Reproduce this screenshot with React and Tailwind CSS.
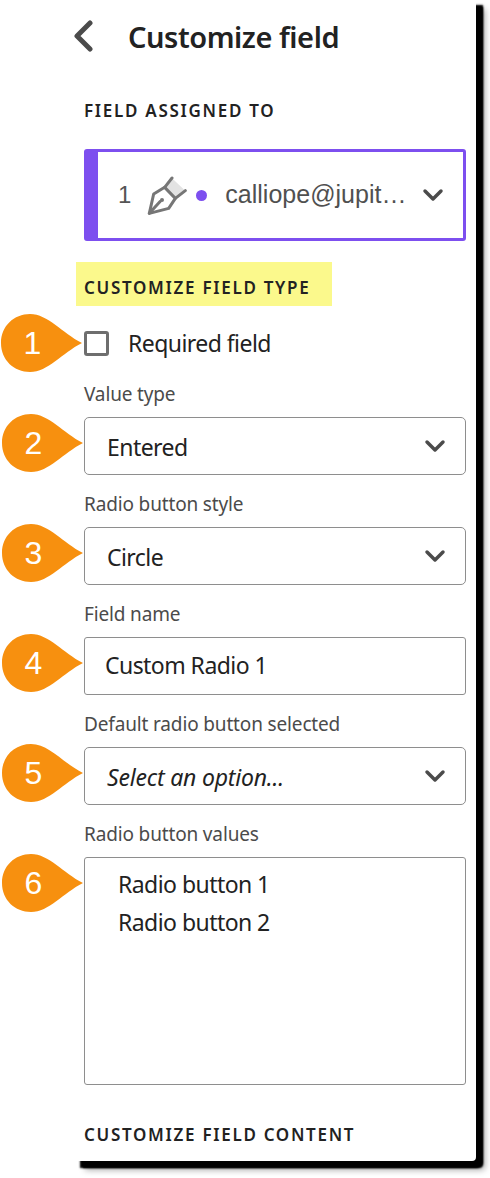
import { ChevronDown } from 'lucide-react'

const font = "font-['Noto_Sans',sans-serif]"

// Orange callout teardrop, tip points right at the field it annotates.
function Badge({ n, place = 'top-[-4px]' }) {
  return (
    <div className={`absolute left-[-84px] w-[82px] h-[58px] ${place}`}>
      <svg width="82" height="58" viewBox="0 0 82 58" className="block">
        <path d="M1 29C1 12 14 0 30 0C48 0 62 19 82 29C62 39 48 58 30 58C14 58 1 46 1 29Z" fill="#f7900f" />
      </svg>
      <span className="absolute left-0 top-0 w-[65px] h-[58px] flex items-center justify-center text-white text-[32px] font-['Liberation_Sans',sans-serif]">
        {n}
      </span>
    </div>
  )
}

function SectionLabel({ children }) {
  return <div className="text-[17px] font-semibold tracking-[1.7px] text-[#222] leading-[24px]">{children}</div>
}

function FieldLabel({ children }) {
  return <div className="text-[19px] leading-[27px] pb-[9px] text-[#4b4b4b] tracking-[-0.15px]">{children}</div>
}

function Chevron({ className }) {
  return <ChevronDown size={32} strokeWidth={2.6} className={`text-[#4b4b4b] ${className}`} />
}

function Select({ n, value, italic }) {
  return (
    <div className="relative h-[58px] border border-[#8e8e8e] rounded-[5px] pl-[22px] pr-[14px] flex items-center justify-between bg-white">
      <Badge n={n} />
      <span className={`pt-[4px] text-[23px] text-[#222] ${italic ? 'italic tracking-[-0.2px]' : 'tracking-[-0.55px]'}`}>{value}</span>
      <Chevron />
    </div>
  )
}

function PenIcon() {
  return (
    <svg width="40" height="40" viewBox="50 25 120 120" fill="none" stroke="#767676" strokeWidth="9" strokeLinejoin="round" strokeLinecap="round">
      <path d="M125 35L165 72L135 95L103 62Z" fill="#e3e3e3" stroke="none" />
      <path d="M57 140L70 82L103 62L135 95L115 125Z" />
      <path d="M103 62L125 34M135 95L165 72M57 140L90 104" />
      <circle cx="95" cy="100" r="6" fill="#767676" stroke="none" />
    </svg>
  )
}

export default function App() {
  return (
    <div className={`w-[490px] h-[1178px] bg-white ${font}`}>
      <div className="ml-[76px] w-[400px] h-[1161px] bg-white rounded-br-[4px] shadow-[7px_7px_2px_#000,4px_7px_2px_#000,7px_5px_2px_#000,9px_9px_6px_#aaa]">
        <div className="h-[74px] flex items-center">
          <svg width="20" height="32" viewBox="0 0 20 32" fill="none" stroke="#4b4b4b" strokeWidth="5" strokeLinecap="round" strokeLinejoin="round" className="ml-[-2px] mt-[-2px]">
            <path d="M16 3L3 16L16 29" />
          </svg>
          <h1 className="ml-[34px] text-[29px] font-semibold text-[#222] tracking-[-0.45px]">Customize field</h1>
        </div>

        <div className="ml-[8px] w-[382px]">
          <div className="mt-[25px]">
            <SectionLabel>FIELD ASSIGNED TO</SectionLabel>
          </div>

          <div className="mt-[26px] h-[92px] border-[3px] border-l-[14px] border-[#7d4fef] rounded-[3px] flex items-center">
            <span className="ml-[20px] text-[24px] text-[#555] font-['Liberation_Sans',sans-serif]">1</span>
            <span className="ml-[16px]"><PenIcon /></span>
            <span className="ml-[9px] w-[11px] h-[11px] rounded-full bg-[#7d4fef]" />
            <span className="ml-[18px] w-[186px] text-[25px] text-[#505050] truncate font-['Liberation_Sans',sans-serif]">calliope@jupiter.com</span>
            <Chevron className="ml-[6px]" />
          </div>

          <div className="mt-[21px] ml-[-8px] w-[256px] h-[44px] bg-[#fbf98c] pl-[8px] pt-[14px]">
            <SectionLabel>CUSTOMIZE FIELD TYPE</SectionLabel>
          </div>

          <div className="relative mt-[20px] flex items-center">
            <Badge n={1} place="top-1/2 -translate-y-1/2" />
            <span className="w-[25px] h-[25px] border-[3px] border-[#6e6e6e] rounded-[3px]" />
            <span className="ml-[19px] text-[23px] text-[#222] tracking-[-0.55px]">Required field</span>
          </div>

          <div className="mt-[20px]">
            <FieldLabel>Value type</FieldLabel>
            <Select n={2} value="Entered" />
          </div>

          <div className="mt-[16px]">
            <FieldLabel>Radio button style</FieldLabel>
            <Select n={3} value="Circle" />
          </div>

          <div className="mt-[16px]">
            <FieldLabel>Field name</FieldLabel>
            <div className="relative h-[58px] border border-[#8e8e8e] rounded-[3px] pl-[20px] flex items-center">
              <Badge n={4} />
              <span className="text-[23px] text-[#222] tracking-[-0.55px]">Custom Radio 1</span>
            </div>
          </div>

          <div className="mt-[16px]">
            <FieldLabel>Default radio button selected</FieldLabel>
            <Select n={5} value="Select an option..." italic />
          </div>

          <div className="mt-[16px]">
            <FieldLabel>Radio button values</FieldLabel>
            <div className="relative h-[228px] border border-[#8e8e8e] rounded-[3px] pl-[33px] pt-[7px]">
              <Badge n={6} />
              <div className="text-[23px] leading-[38px] text-[#222] tracking-[-0.55px]">Radio button 1</div>
              <div className="text-[23px] leading-[38px] text-[#222] tracking-[-0.55px]">Radio button 2</div>
            </div>
          </div>

          <div className="mt-[38px]">
            <SectionLabel>CUSTOMIZE FIELD CONTENT</SectionLabel>
          </div>
        </div>
      </div>
    </div>
  )
}
